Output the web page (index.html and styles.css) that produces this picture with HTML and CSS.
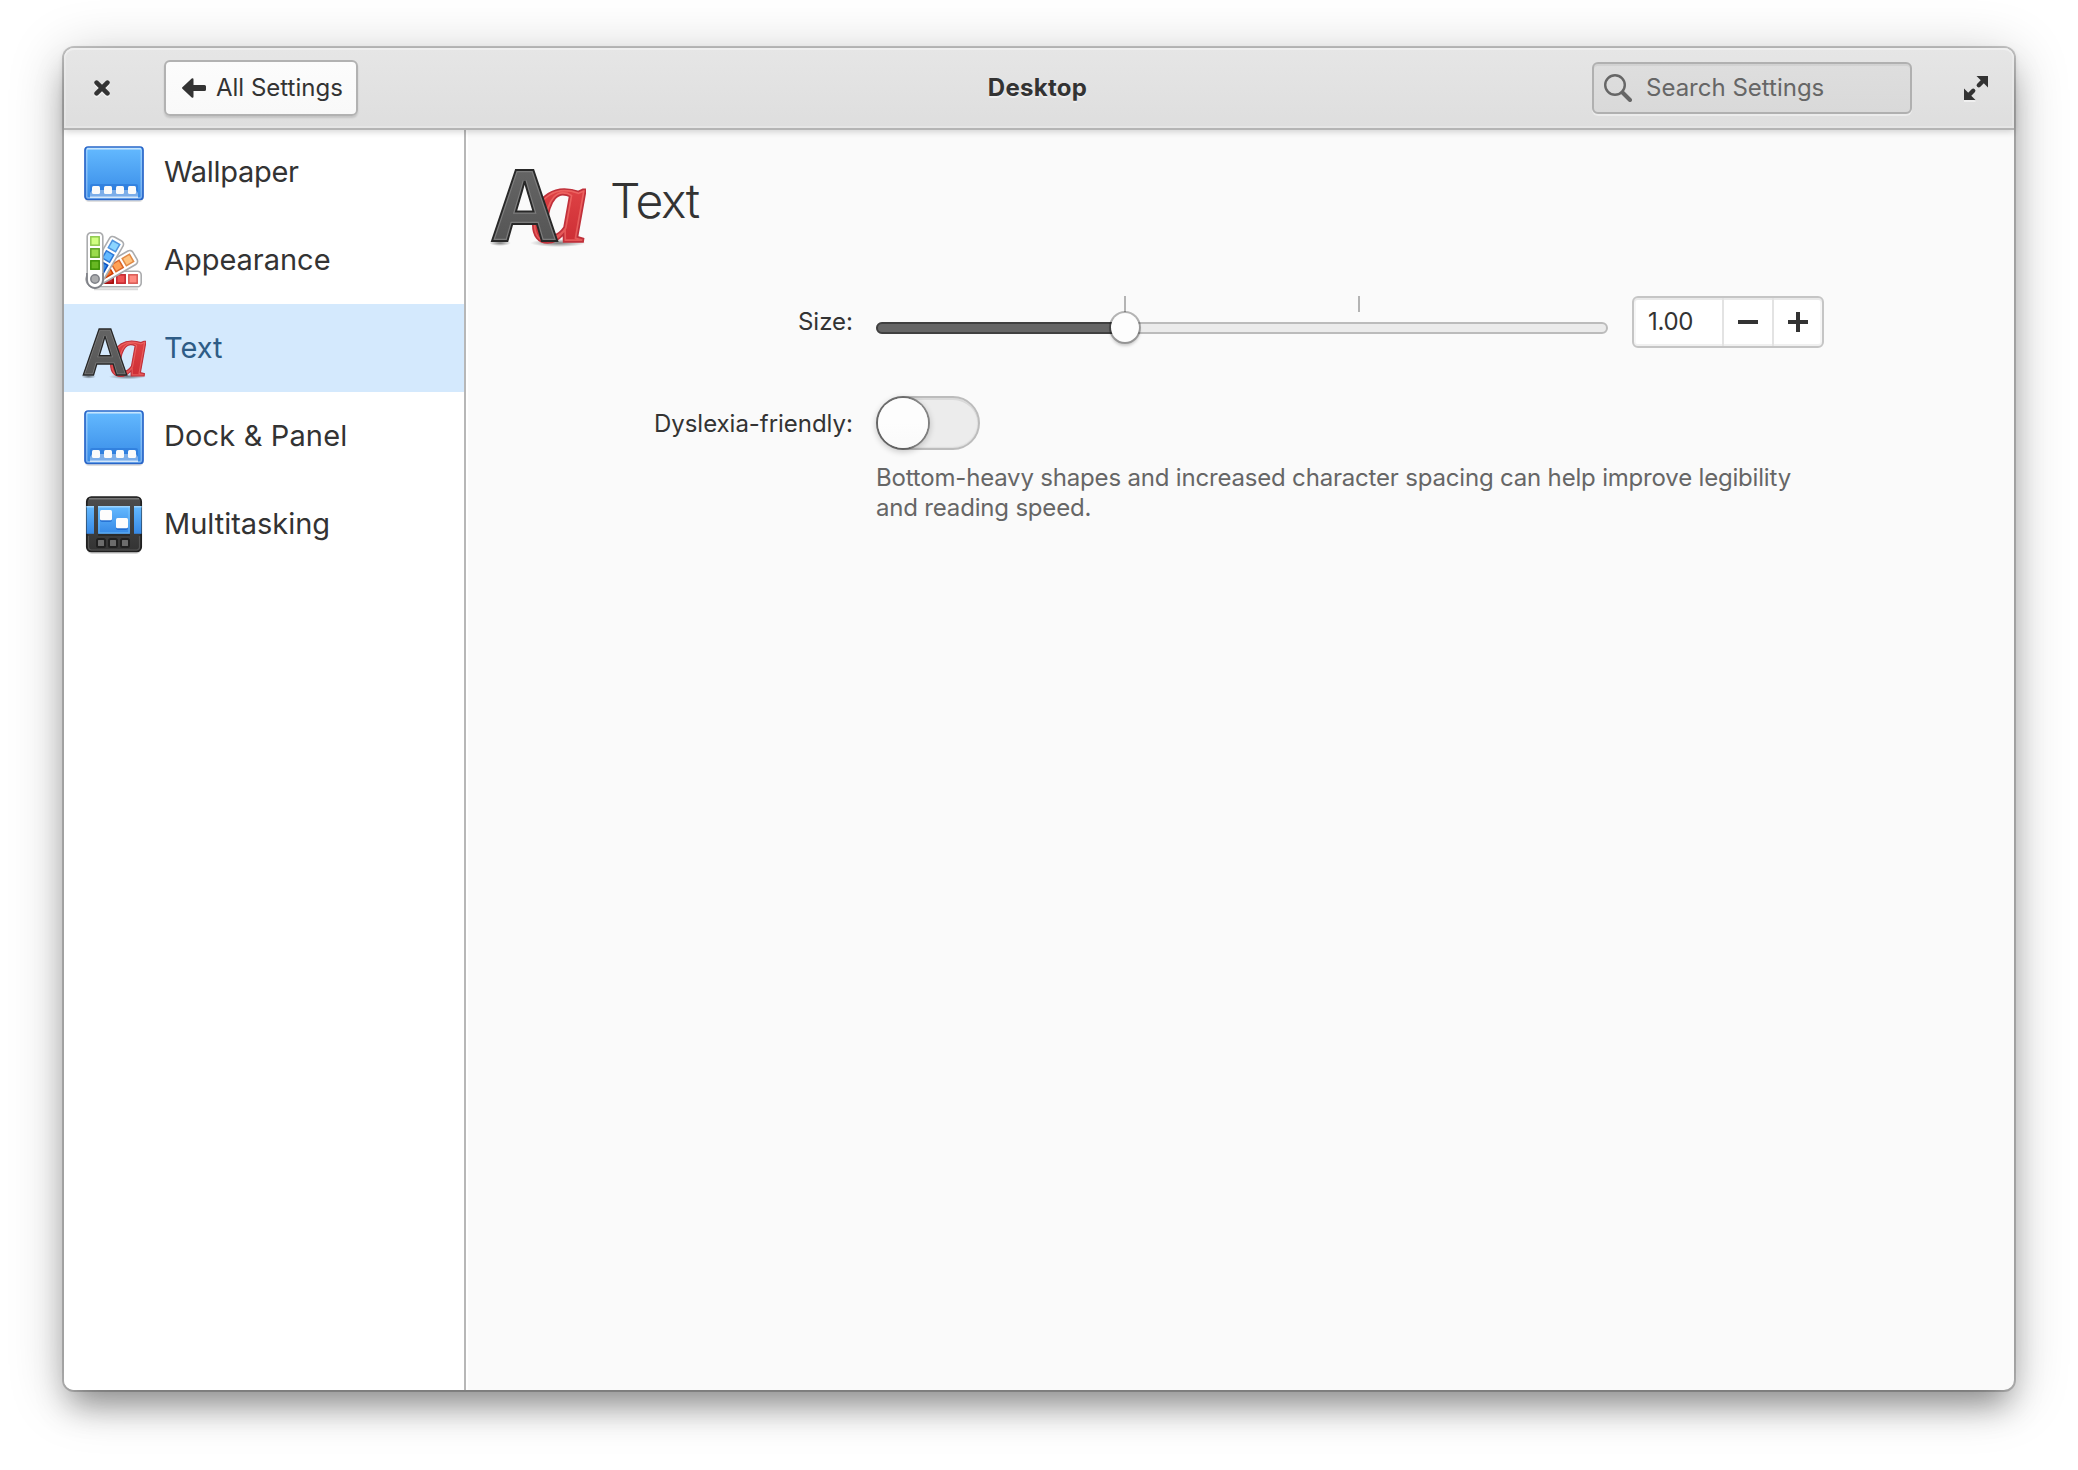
FILE: index.html
```html
<!DOCTYPE html>
<html lang="en">
<head>
<meta charset="utf-8">
<title>Desktop</title>
<link rel="stylesheet" href="styles.css">
</head>
<body>
<svg class="defs" aria-hidden="true">
  <defs>
    <linearGradient id="blue" x1="0" y1="0" x2="0" y2="1"><stop offset="0" stop-color="#64baff"/><stop offset="1" stop-color="#3689e6"/></linearGradient>
    <linearGradient id="grey" x1="0" y1="0" x2="0" y2="1"><stop offset="0" stop-color="#6b6b6b"/><stop offset="1" stop-color="#505050"/></linearGradient>
    <linearGradient id="dark" x1="0" y1="0" x2="0" y2="1"><stop offset="0" stop-color="#4d4d4d"/><stop offset="1" stop-color="#333"/></linearGradient>
    <linearGradient id="red" x1="0" y1="0" x2="0" y2="1"><stop offset="0" stop-color="#ed5353"/><stop offset="1" stop-color="#c6262e"/></linearGradient>
    <radialGradient id="ground"><stop offset="0" stop-color="#000" stop-opacity=".5"/><stop offset="1" stop-color="#000" stop-opacity="0"/></radialGradient>
    <clipPath id="clip-cap"><text class="glyph-cap" transform="translate(2 89) scale(.965 1)">A</text></clipPath>
    <clipPath id="clip-small"><text class="glyph-small" transform="translate(41.500 89.500) scale(1.020 1)">a</text></clipPath>

    <symbol id="icon-desktop" viewBox="0 0 64 64">
      <rect x="3" y="9" width="58" height="53" rx="4" fill="#000" opacity=".12"/>
      <rect x="3" y="7" width="58" height="52.500" rx="3" fill="url(#blue)" stroke="#2a66c8" stroke-width="1.700"/>
      <rect x="4.700" y="8.700" width="54.600" height="49.200" rx="2" fill="none" stroke="#fff" stroke-opacity=".32" stroke-width="1.600"/>
      <path d="M5 8.600H59" stroke="#fff" stroke-opacity=".45" stroke-width="1.600"/>
      <rect x="8" y="44" width="48" height="12" rx="2" fill="#0d52bf" opacity=".3"/>
      <path d="M8 58V53L10 50H54L56 53V58Z" fill="#fff" opacity=".38"/>
      <path d="M8 57.200H56" stroke="#fff" stroke-opacity=".5" stroke-width="1.500"/>
      <g fill="#fafafa"><rect x="10" y="46" width="8" height="8" rx="1.500"/><rect x="22" y="46" width="8" height="8" rx="1.500"/><rect x="34" y="46" width="8" height="8" rx="1.500"/><rect x="46" y="46" width="8" height="8" rx="1.500"/></g>
    </symbol>

    <symbol id="swatches" viewBox="0 0 64 64" overflow="visible">
      <path d="M5.200 8.500a3.700 3.700 0 0 1 3.700-3.700h8.200a3.700 3.700 0 0 1 3.700 3.700V52a7.800 7.800 0 0 1-15.600 0Z" fill="#fff" stroke="#abacae" stroke-width="1.600"/>
      <g stroke-width="1.500"><rect class="s1" x="8.800" y="8.800" width="8.400" height="8.400"/><rect class="s2" x="8.800" y="20.800" width="8.400" height="8.400"/><rect class="s3" x="8.800" y="32.800" width="8.400" height="8.400"/></g>
    </symbol>
    <symbol id="icon-appearance" viewBox="0 0 64 64">
      <path d="M12 61.300H56" stroke="#000" stroke-opacity=".15" stroke-width="2"/>
      <g transform="rotate(90 13 51)"><use class="fan-red" href="#swatches" width="64" height="64"/></g>
      <g transform="rotate(60 13 51)"><use class="fan-orange" href="#swatches" width="64" height="64"/></g>
      <g transform="rotate(30 13 51)"><use class="fan-blue" href="#swatches" width="64" height="64"/></g>
      <use class="fan-green" href="#swatches" width="64" height="64"/>
      <path d="M4.900 45V52a8.100 8.100 0 0 0 16.200 0V45" fill="none" stroke="#7e8087" stroke-width="1.600"/>
      <circle cx="13" cy="51" r="4.200" fill="#abacae" stroke="#7e8087" stroke-width="1.500"/>
    </symbol>

    <symbol id="icon-text" viewBox="0 0 96 96">
      <ellipse cx="10" cy="91" rx="11" ry="3" fill="url(#ground)"/>
      <ellipse cx="68" cy="91" rx="28" ry="4" fill="url(#ground)"/>
      <text class="glyph-small" transform="translate(41.500 89.500) scale(1.020 1)" fill="url(#red)">a</text>
      <g clip-path="url(#clip-small)"><text class="glyph-small" transform="translate(41.500 89.500) scale(1.020 1)" fill="none" stroke="#ff8c82" stroke-opacity=".45" stroke-width="5">a</text></g>
      <text class="glyph-small" transform="translate(41.500 89.500) scale(1.020 1)" fill="none" stroke="#c0303a" stroke-width="1.700">a</text>
      <text class="glyph-cap" transform="translate(2 89) scale(.965 1)" fill="url(#grey)">A</text>
      <g clip-path="url(#clip-cap)"><text class="glyph-cap" transform="translate(2 89) scale(.965 1)" fill="none" stroke="#7c7c7c" stroke-width="4.500">A</text></g>
      <text class="glyph-cap" transform="translate(2 89) scale(.965 1)" fill="none" stroke="#282828" stroke-width="2">A</text>
    </symbol>

    <symbol id="icon-multitasking" viewBox="0 0 64 64">
      <rect x="5" y="7" width="54" height="55" rx="5" fill="#000" opacity=".15"/>
      <rect x="4.800" y="5" width="54.400" height="54.500" rx="4.500" fill="url(#dark)" stroke="#1f1f1f" stroke-width="1.700"/>
      <path d="M7 6.700H57" stroke="#777" stroke-width="1.500"/>
      <path d="M6.500 44V55a3 3 0 0 0 3 3H54.500a3 3 0 0 0 3-3V44" fill="none" stroke="#555" stroke-width="1.200"/>
      <path d="M16 43H48" stroke="#2a2a2a" stroke-width="2"/>
      <g fill="url(#blue)"><path d="M4.500 14H12V41.800H4.500Z"/><path d="M16 14H48V41.800H16Z"/><path d="M52 14H59.500V41.800H52Z"/></g>
      <path d="M4.500 14.700H12M16 14.700H48M52 14.700H59.500" stroke="#9bd4ff" stroke-width="1.400"/>
      <path d="M17 15V41H47V15" fill="none" stroke="#8cd5ff" stroke-opacity=".4" stroke-width="1.300"/>
      <g fill="#0d52bf" opacity=".55"><rect x="18" y="20" width="12" height="10" rx="2"/><rect x="34" y="28" width="12" height="10" rx="2"/></g>
      <g fill="#fdfdfd"><rect x="18" y="18" width="12" height="10.300" rx="1.500"/><rect x="34" y="26" width="12" height="10.300" rx="1.500"/></g>
      <g fill="#6c6c6c" stroke="#202020" stroke-width="2"><rect x="15" y="47" width="8" height="8" rx="1.500"/><rect x="27" y="47" width="8" height="8" rx="1.500"/><rect x="39" y="47" width="8" height="8" rx="1.500"/></g>
    </symbol>
  </defs>
</svg>

<div class="window">
  <header class="headerbar">
    <button class="icon-button" aria-label="Close"><svg class="close" viewBox="0 0 16 18"><path d="M2.600 4.600L13.400 15.400M13.400 4.600L2.600 15.400" stroke="#fff" stroke-opacity=".45"/><path d="M2.600 2.600L13.400 13.400M13.400 2.600L2.600 13.400" stroke="#333"/></svg></button>
    <button class="back"><svg viewBox="0 0 24 20"><path d="M.400 9.300L9.700.5Q11.500-.4 11.500 1.500V7H22.500Q24 7 24 8.500V11.500Q24 13 22.500 13H11.500V18.500Q11.500 20.400 9.700 19.500L.400 10.700Q-.3 10 .400 9.300Z" fill="#333"/></svg>All Settings</button>
    <h1 class="title">Desktop</h1>
    <div class="search"><svg viewBox="0 0 28 28" fill="none" stroke="#666"><circle cx="11" cy="11" r="9.800" stroke-width="2.400"/><path d="M18.500 18.500L26 26" stroke-width="4" stroke-linecap="round"/></svg>Search Settings</div>
    <button class="icon-button expand" aria-label="Maximize"><svg viewBox="0 0 24 26"><path d="M0 14V26H12" fill="#fff" opacity=".5"/><g fill="#333"><path d="M12.500 0H24V11.500Z"/><path d="M11.500 24H0V12.500Z"/></g><path d="M19 5L14.800 9.200M5 19L9.200 14.800" stroke="#333" stroke-width="4.400" stroke-linecap="round"/></svg></button>
  </header>
  <div class="body">
    <nav class="sidebar">
      <a class="row"><svg><use href="#icon-desktop"/></svg><span class="tight">Wallpaper</span></a>
      <a class="row"><svg><use href="#icon-appearance"/></svg><span>Appearance</span></a>
      <a class="row selected"><svg><use href="#icon-text"/></svg><span>Text</span></a>
      <a class="row"><svg><use href="#icon-desktop"/></svg><span class="loose">Dock &amp; Panel</span></a>
      <a class="row"><svg><use href="#icon-multitasking"/></svg><span>Multitasking</span></a>
    </nav>
    <main class="content">
      <div class="page-head"><svg><use href="#icon-text"/></svg><h2>Text</h2></div>
      <div class="form">
        <label class="size">Size:</label>
        <div class="slider"><i class="mark mark-default"></i><i class="mark mark-large"></i><div class="track"><div class="fill"></div></div><i class="knob"></i></div>
        <div class="spin"><span class="value">1.00</span><button aria-label="Decrease"><svg viewBox="0 0 20 20"><path d="M0 10H20"/></svg></button><button aria-label="Increase"><svg viewBox="0 0 20 20"><path d="M0 10H20M10 0V20"/></svg></button></div>
        <label class="second">Dyslexia-friendly:</label>
        <div class="switch second"><i></i></div>
        <p class="hint">Bottom-heavy shapes and increased character spacing can help improve legibility and reading speed.</p>
      </div>
    </main>
  </div>
</div>
</body>
</html>
```
FILE: styles.css
```css
* { box-sizing: border-box; }

body {
  margin: 0;
  height: 1470px;
  padding: 48px 64px 80px;
  background: #fff;
  color: #333;
  font: 400 24px/30px Inter, "Open Sans", sans-serif;
  overflow: hidden;
}

button { font: inherit; color: inherit; background: none; border: 0; padding: 0; }
h1, h2, p { margin: 0; }
svg { display: block; flex: none; }
.defs { position: absolute; width: 0; height: 0; }

.glyph-cap { font: 700 98px "Open Sans", sans-serif; }
.glyph-small { font: italic 700 112px "Liberation Serif", serif; }

.fan-green { --a: #d1ff82; --b: #9bdb4d; --c: #68b723; --sa: #8fc94f; --sb: #5fa325; --sc: #3a9104; }
.fan-blue { --a: #8cd5ff; --b: #64baff; --c: #3689e6; --sa: #4f94df; --sb: #2f78d6; --sc: #0d52bf; }
.fan-orange { --a: #ffc27d; --b: #ffa154; --c: #f37329; --sa: #e08a45; --sb: #d9662a; --sc: #cc3b02; }
.fan-red { --a: #ff8c82; --b: #ed5353; --c: #c6262e; --sa: #d95a55; --sb: #c6262e; --sc: #a10705; }
.s1 { fill: var(--a); stroke: var(--sa); }
.s2 { fill: var(--b); stroke: var(--sb); }
.s3 { fill: var(--c); stroke: var(--sc); }

.window {
  display: flex;
  flex-direction: column;
  width: 1950px;
  height: 1342px;
  border-radius: 10px;
  background: #fafafa;
  box-shadow:
    0 0 0 2px rgba(0, 0, 0, .2),
    0 20px 32px -6px rgba(0, 0, 0, .36),
    0 8px 56px rgba(0, 0, 0, .22);
}

.headerbar {
  position: relative;
  z-index: 1;
  flex: none;
  display: grid;
  grid-template-columns: 28px 242px 1fr 320px 78px;
  align-items: center;
  height: 82px;
  padding: 0 24px;
  border-bottom: 2px solid #b4b4b4;
  border-radius: 10px 10px 0 0;
  background: linear-gradient(#e6e6e6, #dedede);
  box-shadow:
    inset 0 2px #efefef,
    inset 0 -2px #e5e5e5,
    inset 2px 0 rgba(255, 255, 255, .2),
    inset -2px 0 rgba(255, 255, 255, .2),
    0 2px 6px rgba(0, 0, 0, .16);
}

.icon-button { display: flex; justify-content: center; }
.close { width: 16px; height: 18px; margin: 2px 0 0; fill: none; stroke-width: 4.6; stroke-linecap: round; }
.expand { margin-left: 50px; }
.expand svg { width: 24px; height: 26px; margin-top: 2px; }

.back {
  display: flex;
  align-items: center;
  gap: 10px;
  width: 194px;
  height: 56px;
  margin-left: 48px;
  padding: 0 14px 0 16px;
  white-space: nowrap;
  border: 2px solid #b2b2b2;
  border-radius: 6px;
  background: linear-gradient(#fcfcfc, #f9f9f9);
  box-shadow: 0 2px 2px rgba(0, 0, 0, .12);
}
.back svg { width: 24px; height: 20px; }

.title {
  padding-left: 125px;
  text-align: center;
  font-size: 24px;
  font-weight: 700;
  letter-spacing: .3px;
  text-shadow: 0 2px rgba(255, 255, 255, .45);
}

.search {
  display: flex;
  align-items: center;
  gap: 14px;
  height: 52px;
  padding: 0 10px;
  color: #666;
  border: 2px solid #b0b0b0;
  border-radius: 6px;
  background: linear-gradient(#dedede, #d9d9d9);
  box-shadow: inset 0 2px rgba(0, 0, 0, .05), 0 2px rgba(255, 255, 255, .4);
}
.search svg { width: 28px; height: 28px; }

.body { flex: 1; display: flex; margin-top: -2px; min-height: 0; }

.sidebar {
  flex: none;
  width: 402px;
  border-right: 2px solid #b7b7b7;
  border-bottom-left-radius: 10px;
  background: #fff;
}
.row {
  display: flex;
  align-items: center;
  gap: 18px;
  height: 88px;
  padding-left: 18px;
  font-size: 29px;
  line-height: 36px;
  letter-spacing: -.03px;
}
.row svg { width: 64px; height: 64px; }
.row.selected { background: #d4e9fd; color: #2e5c86; }
.tight { letter-spacing: -.3px; }
.loose { letter-spacing: .14px; }

.content { flex: 1; padding: 24px; box-shadow: inset 2px 0 #fff; border-bottom-right-radius: 10px; }

.page-head { display: flex; align-items: center; gap: 24px; }
.page-head svg { width: 96px; height: 96px; }
.page-head h2 { padding-top: 2px; font-weight: 300; font-size: 48px; line-height: 60px; letter-spacing: -1.3px; }

.form {
  display: grid;
  grid-template-columns: 198px 732px 192px;
  column-gap: 24px;
  align-items: center;
  margin: 48px 0 0 164px;
}
.form label { text-align: right; white-space: nowrap; }
.form .size { margin-right: -1px; }
.form .second { margin-top: 48px; }
.form label.second { margin-top: 50px; letter-spacing: -.04px; }

.slider { position: relative; height: 52px; padding-top: 26px; }
.track { height: 12px; border: 2px solid #bbb; border-radius: 6px; background: #ebebeb; }
.fill { width: 250px; height: 12px; margin: -2px; border: 2px solid #404040; border-radius: 6px 0 0 6px; background: #666; }
.mark { position: absolute; top: 0; width: 2px; height: 16px; background: #b4b4b4; }
.mark-default { left: 248px; }
.mark-large { left: 482px; }
.knob {
  position: absolute;
  left: 235px;
  top: 17px;
  width: 28px;
  height: 29px;
  border-radius: 50%;
  background: #fdfdfd;
  box-shadow: 0 0 0 2px rgba(0, 0, 0, .28), 0 3px 3px 1px rgba(0, 0, 0, .18);
}

.spin {
  display: flex;
  height: 52px;
  border: 2px solid #c5c5c5;
  border-radius: 6px;
  background: #fff;
  box-shadow: inset 0 2px #e9e9e9, inset 0 -2px #f0f0f0, inset 2px 0 #f6f6f6, inset -2px 0 #f6f6f6;
}
.value { flex: 1; padding: 9px 0 0 14px; letter-spacing: -.3px; }
.spin button { display: grid; place-items: center; width: 50px; border-left: 2px solid #e3e3e3; }
.spin svg { width: 20px; height: 20px; stroke: #333; stroke-width: 4; }

.switch {
  width: 104px;
  height: 54px;
  border: 2px solid #bcbcbc;
  border-radius: 27px;
  background: #ececec;
  box-shadow: inset 0 2px #dadada, inset 0 -1px 1px #dedede, inset 0 0 2px #ddd;
}
.switch i {
  display: block;
  width: 50px;
  height: 50px;
  border-radius: 50%;
  background: linear-gradient(#fdfdfd 50%, #fafafa);
  box-shadow: 0 0 0 2px rgba(0, 0, 0, .38), 0 2px 6px 2px rgba(0, 0, 0, .2);
}

.hint { grid-column: 2 / 4; margin-top: 13px; color: #666; letter-spacing: -.185px; }
```
